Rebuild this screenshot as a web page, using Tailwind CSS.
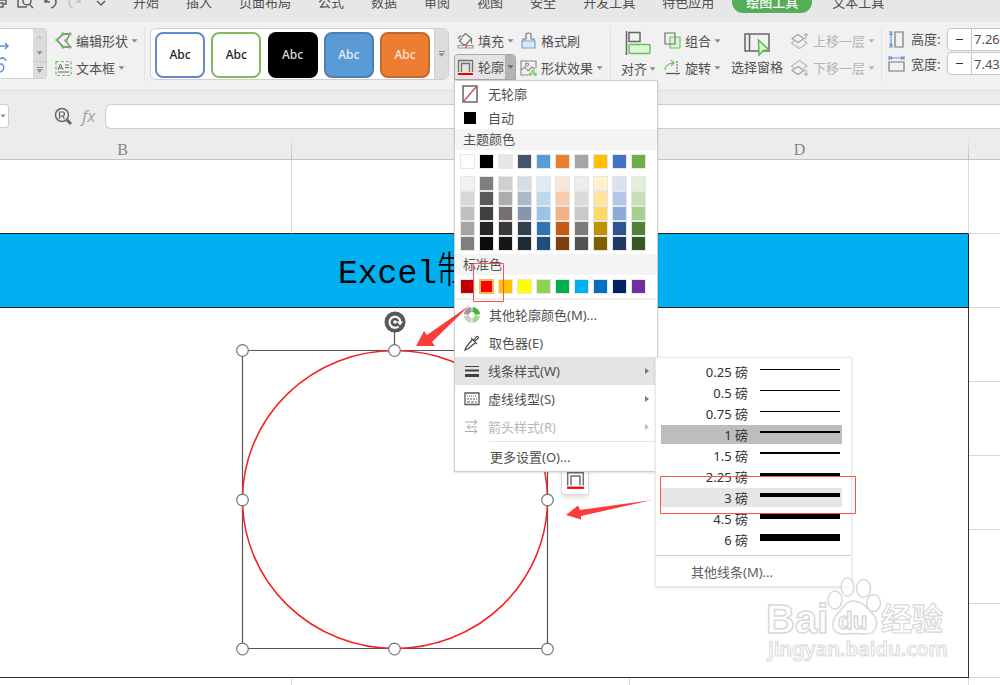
<!DOCTYPE html>
<html lang="zh-CN">
<head>
<meta charset="utf-8">
<meta name="viewport" content="width=device-width, initial-scale=1">
<title>绘图工具</title>
<script src="https://cdn.jsdelivr.net/npm/@tailwindcss/browser@4"></script>
</head>
<body class="min-h-screen overflow-x-clip bg-white font-['Noto_Sans','Noto_Sans_CJK_SC',sans-serif] text-[13px] leading-5 text-[#505050]">
<svg class="hidden">
  <symbol id="caret" viewBox="0 0 7 4"><path d="M.5.3h6L3.500 3.700z" fill="#8a8a8a"/></symbol>
  <symbol id="outline" viewBox="0 0 17 17"><path d="M1.500 13V1.500h14V13M4.500 13V4.500h8V13" fill="none" stroke="#707070" stroke-width="1.300"/><path d="M1 14h15v2H1z" fill="#f00000"/></symbol>
  <symbol id="layers" viewBox="0 0 20 18"><g fill="none" stroke="#b8b8b8" stroke-width="1.200"><path d="M8 2.500 14 6.500 8 10.500 2 6.500z" stroke="#a2a2a2"/><path d="M4 9 1.500 11 9.500 16.500 17 11 13.500 8.500M16 7.500V1.500M14 3.500l2-2 2 2"/></g></symbol>
</svg>

<div class="relative flex min-h-screen flex-col overflow-clip">
  <nav class="h-[22px] overflow-clip bg-[#e7e7e7]">
    <div class="-mt-[10px] flex h-6 items-center whitespace-nowrap">
      <div class="flex w-[133px] shrink-0 items-center">
        <svg class="h-6 w-[120px]" viewBox="0 -10 120 24" fill="none" stroke="#606060" stroke-width="1.500">
          <path d="M0 0h6v4H4M0 3h3v4H0"/><path d="M18-4v11h9M18-4h10"/><circle cx="27" cy="1" r="4"/><path d="m29 4 4 4"/>
          <path d="M45-2v4h5M45 2c4-5 11-5 11 0 0 3-2 5-5 6"/><path d="M80-2v4h-5M80 2c-4-5-11-5-11 0 0 3 2 5 4 6" stroke="#c4c4c4"/><path d="m97 1 4 4 4-4"/>
        </svg>
      </div>
      <div class="flex shrink-0 gap-[27px]">
        <button>开始</button><button>插入</button><button>页面布局</button><button>公式</button><button>数据</button><button>审阅</button><button>视图</button><button>安全</button><button>开发工具</button><button>特色应用</button>
      </div>
      <button class="ml-[18px] mr-5 h-[22px] w-20 shrink-0 rounded-full bg-[#55ad58] font-medium text-white">绘图工具</button>
      <button class="shrink-0">文本工具</button>
    </div>
  </nav>

  <div class="relative z-20 flex h-[69px] items-start whitespace-nowrap border-b border-[#dedede] bg-[#f1f1f1]">
    <div class="mt-[6px] flex h-[51px] w-[47px] shrink-0 overflow-clip rounded-r border border-l-0 border-[#cfcfcf] bg-white">
      <svg class="h-full w-[33px]" viewBox="0 0 33 49" fill="none" stroke="#6a8fd6" stroke-width="1.500"><path d="M0 17h8M5 14l3 3-3 3"/><path d="M0 30q4-3 6 2M0 35c5-1 5 7 0 8"/></svg>
      <div class="grid flex-1 grid-rows-3 divide-y divide-[#c6c9cc] bg-[#dcdcdc]">
        <button aria-label="上" class="flex items-center justify-center opacity-30"><svg class="h-1 w-[7px] rotate-180"><use href="#caret"/></svg></button>
        <button aria-label="下" class="flex items-center justify-center"><svg class="h-1 w-[7px]"><use href="#caret"/></svg></button>
        <button aria-label="更多" class="flex flex-col items-center justify-center gap-px"><span class="h-px w-[6px] bg-[#888]"></span><svg class="h-1 w-[7px]"><use href="#caret"/></svg></button>
      </div>
    </div>
    <div class="ml-2 mt-[5px] w-[90px] shrink-0 border-r border-[#e2e2e2]">
      <button class="flex h-[27px] items-center"><svg class="mr-1 size-[17px]" viewBox="0 0 17 17"><path d="M15 2H8L2 8l6 7h7l-4-6z" fill="none" stroke="#707070" stroke-width="1.300"/><g fill="#6ac45c"><circle cx="15" cy="2" r="1.700"/><circle cx="8" cy="2" r="1.700"/><circle cx="2" cy="8" r="1.700"/><circle cx="8" cy="15" r="1.700"/><circle cx="15" cy="15" r="1.700"/><circle cx="11" cy="8.500" r="1.700"/></g></svg>编辑形状<svg class="ml-[3px] h-1 w-[7px]"><use href="#caret"/></svg></button>
      <button class="flex h-7 items-center"><svg class="mr-1 size-[17px]" viewBox="0 0 17 17" fill="none"><path d="M1 1.500h15v14H1z" stroke="#6ac45c" stroke-width="1.200" stroke-dasharray="3 2"/><path d="m3 10 2.500-6L8 10M4 8h3M10 5h4M10 7.500h4M3 12h11" stroke="#666"/></svg>文本框<svg class="ml-[3px] h-1 w-[7px]"><use href="#caret"/></svg></button>
    </div>
    <div class="ml-[5px] mt-[6px] flex h-[52px] w-[299px] shrink-0 overflow-clip rounded-md border border-[#cfcfcf] bg-white text-xs font-medium">
      <div class="flex flex-1 items-end justify-between px-[4px] pb-px">
        <button class="h-[46px] w-[50px] rounded-lg border-2 border-[#6189cf] text-[#222]">Abc</button>
        <button class="h-[46px] w-[50px] rounded-lg border-2 border-[#83b95f] text-[#222]">Abc</button>
        <button class="h-[46px] w-[50px] rounded-lg bg-black text-[#ddd]">Abc</button>
        <button class="h-[46px] w-[50px] rounded-lg border-2 border-[#4c80b2] bg-[#5b9bd5] text-[#e5eef7]">Abc</button>
        <button class="h-[46px] w-[50px] rounded-lg border-2 border-[#c06a30] bg-[#ed7d31] text-[#fbe5d5]">Abc</button>
      </div>
      <button aria-label="更多样式" class="flex w-[14px] flex-col items-center justify-center gap-px border-l border-[#cfcfcf] bg-[#dcdcdc]"><span class="h-px w-[6px] bg-[#888]"></span><svg class="h-1 w-[7px]"><use href="#caret"/></svg></button>
    </div>
    <div class="ml-[5px] mt-[5px] w-[63px] shrink-0">
      <button class="flex h-[27px] items-center pl-[3px]"><svg class="mr-1 size-[17px]" viewBox="0 0 17 17" fill="none" stroke="#707070" stroke-width="1.200"><path d="M1 6.500 4 3.500M5 5l3.500-3.500 6 5-5.500 6H6L2.500 9 5 6M14.500 6.500v5"/><path d="M1 13.500h15v2.500H1z" stroke="#999"/><path d="m8 16 3-3" stroke="#e55"/></svg>填充<svg class="ml-[3px] h-1 w-[7px]"><use href="#caret"/></svg></button>
      <div class="relative">
        <button class="flex h-[26px] w-[62px] items-center overflow-clip rounded-t border border-[#a8a8a8] bg-[#e4e4e4] pl-[2px]"><svg class="mr-1 size-[17px] shrink-0"><use href="#outline"/></svg>轮廓<span class="ml-px flex h-full flex-1 items-center justify-center bg-[#b4b4b4]"><svg class="h-1 w-[7px] brightness-75"><use href="#caret"/></svg></span></button>

        <div role="menu" class="absolute left-0 top-full w-[204px] border border-[#cdcdcd] bg-white pb-px shadow-sm">
          <button class="flex h-[25px] w-full items-center gap-[10px] pl-[7px]"><svg class="h-[18px] w-4" viewBox="0 0 16 18"><path d="M1 1h14v16H1z" fill="#fff" stroke="#666" stroke-width="1.500"/><path d="M2 16 14 2" stroke="#d44" stroke-width="1.300"/></svg>无轮廓</button>
          <button class="flex h-[23px] w-full items-center gap-[12px] pl-[9px]"><span class="size-3 bg-black"></span>自动</button>
          <div class="h-[21px] bg-[#f4f4f4] pl-2">主题颜色</div>
          <div id="theme" class="ml-[5px] mt-1 flex gap-1"></div>
          <div id="shades" class="ml-[5px] mt-[7px] grid w-fit grid-cols-10 gap-x-1"></div>
          <div class="mt-[3px] h-[21px] bg-[#f4f4f4] pl-2">标准色</div>
          <div id="standard" class="ml-[5px] mt-1 flex gap-1"></div>
          <div class="mb-px mt-1 h-[2px] bg-[#eeeeee]"></div>
          <button class="flex h-7 w-full items-center gap-[9px] pl-[9px]"><svg class="size-4" viewBox="0 0 16 16" fill="none" stroke-width="5"><path d="M8.500 2.500a5.500 5.500 0 0 1 5 5" stroke="#43b530"/><path d="M13.500 8.500a5.500 5.500 0 0 1-5 5" stroke="#9bdb90"/><path d="M7.500 13.500a5.500 5.500 0 0 1-5-5" stroke="#cacaca"/><path d="M2.500 7.500a5.500 5.500 0 0 1 5-5" stroke="#999"/></svg>其他轮廓颜色(M)...</button>
          <button class="flex h-7 w-full items-center gap-[9px] pl-[9px]"><svg class="size-4" viewBox="0 0 16 16" fill="none" stroke="#444" stroke-width="1.200"><path d="m8 5-5.500 6.500L1 15l3.500-1.500L11 8"/><path d="m7 3 6 6M9.500 5.500l3-4q2-.5 2 1.500L10.500 6.500"/></svg>取色器(E)</button>
          <div class="relative">
            <button class="flex h-7 w-full items-center gap-2 bg-[#e4e4e4] pl-[9px]"><svg class="size-4" viewBox="0 0 16 16" fill="#404040"><path d="M1 3h14v1H1zM1 6.500h14v2H1zM1 11h14v3H1z"/></svg>线条样式(W)<svg class="ml-auto mr-2 h-[6px] w-1" viewBox="0 0 4 6"><path d="m0 0 4 3-4 3z" fill="#777"/></svg></button>
            <div role="menu" class="absolute left-[200px] top-0 w-[197px] border border-[#e8e8e8] bg-white pt-[3px] text-[#303030] shadow-sm">
              <div id="weights" class="px-[5px]"></div>
              <div class="mt-[5px] h-px bg-[#cfcfcf]"></div>
              <button class="flex h-[30px] w-full items-center pl-[35px] pt-[2px] text-[#606060]">其他线条(M)...</button>
            </div>
          </div>
          <button class="flex h-7 w-full items-center gap-2 pl-[9px]"><svg class="size-4" viewBox="0 0 16 16" fill="none" stroke="#555"><path d="M1 2h14v11.500H1z" stroke-width="1.300"/><path d="M3 5h10" stroke-dasharray="1 1"/><path d="M3 8h10" stroke-dasharray="2 1"/><path d="M3 11h10" stroke-dasharray="3 1"/></svg>虚线线型(S)<svg class="ml-auto mr-2 h-[6px] w-1" viewBox="0 0 4 6"><path d="m0 0 4 3-4 3z" fill="#777"/></svg></button>
          <button disabled class="flex h-7 w-full items-center gap-2 pl-[9px] text-[#b5b5b5]"><svg class="size-4" viewBox="0 0 16 16" fill="none" stroke="#aaa"><path d="M1 3h12M10 .5 13 3l-3 2.500M3 8h10M6 5.500 3 8l3 2.500M1 12.500h12M10 10l3 2.500-3 2.500"/></svg>箭头样式(R)<svg class="ml-auto mr-2 h-[6px] w-1" viewBox="0 0 4 6"><path d="m0 0 4 3-4 3z" fill="#bbb"/></svg></button>
          <div class="ml-[34px] h-px bg-[#e8e8e8]"></div>
          <button class="flex h-7 w-full items-center pl-[35px] pt-px">更多设置(O)...</button>
        </div>
      </div>
    </div>
    <div class="ml-[3px] mt-[5px] w-[91px] shrink-0 border-r border-[#e2e2e2]">
      <button class="flex h-[27px] items-center"><svg class="mr-1 size-[17px]" viewBox="0 0 17 17" fill="none" stroke-width="1.200"><path d="M3 9V7h3V2q2.500-2 5 0v5h3v2" stroke="#777"/><path d="M2 9h13v7H2z" fill="#dbe6f8" stroke="#7d9fdc"/></svg>格式刷</button>
      <button class="flex h-7 items-center"><svg class="mr-1 size-[17px]" viewBox="0 0 17 17" fill="none" stroke="#888" stroke-width="1.100"><path d="M8 15H1V1h15v7M1 10l4-3 3 4 4-4 3 2"/><circle cx="7" cy="4.500" r="1.500"/><path d="m13 10 1.500 2-1.500 2-1.500-2zM10 13.500l1 1-1 1-1-1zM15.500 13.500l1 1-1 1-1-1z" stroke="#6ac45c"/></svg>形状效果<svg class="ml-[3px] h-1 w-[7px]"><use href="#caret"/></svg></button>
    </div>
    <button class="ml-[10px] mt-[8px] w-[37px] shrink-0"><svg class="ml-1 h-[26px] w-[26px]" viewBox="0 0 26 26" fill="none" stroke-width="1.500"><path d="M1.500 1v24M4 2.500h11v9H4z" stroke="#666"/><rect x="4" y="14.500" width="21" height="9" rx="1" fill="#e0f3dc" stroke="#6ac45c"/></svg><span class="mt-[3px] flex h-5 items-center">对齐<svg class="ml-[2px] h-1 w-[7px]"><use href="#caret"/></svg></span></button>
    <div class="ml-[6px] mt-[5px] w-[60px] shrink-0">
      <button class="flex h-[27px] items-center"><svg class="mr-1 size-[17px]" viewBox="0 0 17 17" fill="none" stroke-width="1.200"><path d="M6 5h10v11H6z" fill="#dff2da" stroke="#6ac45c"/><path d="M1 1h10v11H1z" stroke="#707070"/></svg>组合<svg class="ml-[3px] h-1 w-[7px]"><use href="#caret"/></svg></button>
      <button class="flex h-7 items-center"><svg class="mr-1 size-[17px]" viewBox="0 0 17 17" fill="none" stroke-width="1.200"><path d="M1 10q1-7 9-7M7 0l3 3-3 3" stroke="#6ac45c"/><path d="M2 13.500h14" stroke="#555"/><path d="M13 1v15" stroke="#777" stroke-dasharray="2 1"/></svg>旋转<svg class="ml-[3px] h-1 w-[7px]"><use href="#caret"/></svg></button>
    </div>
    <button class="ml-[6px] mt-[10px] w-[54px] shrink-0"><svg class="ml-[14px] h-6 w-[27px]" viewBox="0 0 27 24" fill="none" stroke-width="1.500"><path d="M1 2h24v17H1zM5.500 2v17" stroke="#666"/><path d="m14.500 8 10.500 10-5.500.5-4.500 4.500z" fill="#dff2da" stroke="#59bb49"/></svg><span class="mt-px block h-5">选择窗格</span></button>
    <div class="ml-[6px] mt-[5px] w-[92px] shrink-0 border-r border-[#e2e2e2] text-[#b5b5b5]">
      <button disabled class="flex h-[27px] items-center"><svg class="mr-[3px] h-[18px] w-5"><use href="#layers"/></svg>上移一层<svg class="ml-[3px] h-1 w-[7px] opacity-60"><use href="#caret"/></svg></button>
      <button disabled class="flex h-7 items-center"><svg class="mr-[3px] h-[18px] w-5 -scale-y-100"><use href="#layers"/></svg>下移一层<svg class="ml-[3px] h-1 w-[7px] opacity-60"><use href="#caret"/></svg></button>
    </div>
    <div class="ml-[6px] mt-[6px] grid shrink-0 gap-[2px]">
      <div class="flex h-[22px] items-center"><svg class="mr-[6px] size-[17px]" viewBox="0 0 17 17" fill="none" stroke-width="1.200"><path d="M7 1h8v15H7z" stroke="#777"/><path d="M1 1h4M1 16h4M3 2v13M1.500 4 3 2l1.500 2M1.500 13 3 15l1.500-2" stroke="#6a93dc"/></svg><label for="height" class="w-[36px]">高度:</label><div class="flex h-[23px] w-[90px] overflow-clip rounded border border-[#c6c6c6] bg-white"><button aria-label="减小高度" class="flex w-[25px] items-center justify-center border-r border-[#c6c6c6]"><span class="h-px w-[7px] bg-[#333]"></span></button><input id="height" value="7.26" class="w-16 pl-[2px]"></div></div>
      <div class="flex h-[23px] items-center"><svg class="mr-[6px] size-[17px]" viewBox="0 0 17 17" fill="none" stroke-width="1.200"><path d="M1 7h15v9H1z" stroke="#777"/><path d="M1 1v4M16 1v4M2 3h13M4 1.500 2 3l2 1.500M13 1.500 15 3l-2 1.500" stroke="#6a93dc"/></svg><label for="width" class="w-[36px]">宽度:</label><div class="flex h-[23px] w-[90px] overflow-clip rounded border border-[#c6c6c6] bg-white"><button aria-label="减小宽度" class="flex w-[25px] items-center justify-center border-r border-[#c6c6c6]"><span class="h-px w-[7px] bg-[#333]"></span></button><input id="width" value="7.43" class="w-16 pl-[2px]"></div></div>
    </div>
  </div>

  <div class="flex h-[38px] items-end bg-[#ececec]">
    <button aria-label="名称框" class="mb-px flex h-6 w-[9px] shrink-0 items-center rounded-r border border-l-0 border-[#cdcdcd] bg-white"><svg class="h-1 w-[6px]"><use href="#caret"/></svg></button>
    <button aria-label="查找" class="mb-[3px] ml-[45px]"><svg class="size-[19px]" viewBox="0 0 19 19" fill="none" stroke="#666"><circle cx="8" cy="8" r="6.500" stroke-width="1.500"/><path d="m13 13 4 4" stroke-width="3"/><path d="M5.500 12V5h4q2 2 0 4h-4M8.500 9l2 3" stroke-width="1.200"/></svg></button>
    <button class="mb-[3px] ml-[9px] w-[23px] text-left font-['Open_Sans','Noto_Sans',sans-serif] text-[17px] italic text-[#a5a5a5]">fx</button>
    <input aria-label="编辑栏" class="h-[25px] min-w-0 flex-1 rounded-l-md border border-r-0 border-[#cdcdcd] bg-white px-2">
  </div>

  <table class="w-full table-fixed border-separate border-spacing-0">
    <colgroup><col class="w-[292px]"><col class="w-[338px]"><col class="w-[339px]"><col></colgroup>
    <thead>
      <tr class="h-[31px] bg-[#ececec] font-['Liberation_Serif',serif] text-base text-[#858585]">
        <th class="border-b border-[#c4c4c4] bg-[linear-gradient(transparent,#bbb)] bg-[length:1px_70%] bg-right-bottom bg-no-repeat p-0 pr-[47px] pt-3 font-normal leading-[18px]">B</th>
        <th class="border-b border-[#c4c4c4] bg-[linear-gradient(transparent,#bbb)] bg-[length:1px_70%] bg-right-bottom bg-no-repeat p-0 pt-3 font-normal leading-[18px]"></th>
        <th class="border-b border-[#c4c4c4] bg-[linear-gradient(transparent,#bbb)] bg-[length:1px_70%] bg-right-bottom bg-no-repeat p-0 pt-3 font-normal leading-[18px]">D</th>
        <th class="border-b border-[#c4c4c4] p-0"></th>
      </tr>
    </thead>
    <tbody>
      <tr class="h-[74px]"><td class="border-b border-r border-[#d9d9d9] border-b-[#222]"></td><td class="border-b border-r border-[#d9d9d9] border-b-[#222]"></td><td class="border-b border-r border-[#d9d9d9] border-b-[#222]"></td><td class="border-b border-[#d9d9d9]"></td></tr>
      <tr class="h-[74px]"><td colspan="3" class="border-b border-r border-[#222] bg-[#00b0f0] p-0 pl-[338px] text-[33px] leading-[56px] text-black"><span class="font-['Liberation_Mono',monospace]">Excel</span><span class="font-['Noto_Sans_CJK_SC',sans-serif] text-[38px] font-light">制</span></td><td class="border-b border-[#d9d9d9]"></td></tr>
      <tr class="h-[74px]"><td colspan="3" rowspan="5" class="border-b border-r border-[#333]"></td><td class="border-b border-[#d9d9d9]"></td></tr>
      <tr class="h-[74px]"><td class="border-b border-[#d9d9d9]"></td></tr>
      <tr class="h-[74px]"><td class="border-b border-[#d9d9d9]"></td></tr>
      <tr class="h-[74px]"><td class="border-b border-[#d9d9d9]"></td></tr>
      <tr class="h-[74px]"><td class="border-b border-[#d9d9d9]"></td></tr>
      <tr class="h-[7px]"><td class="border-r border-[#d9d9d9] p-0"></td><td class="border-r border-[#d9d9d9] p-0"></td><td class="border-r border-[#d9d9d9] p-0"></td><td class="p-0"></td></tr>
    </tbody>
  </table>

  <!-- Selected circle with its handles -->
  <svg class="pointer-events-none absolute inset-0 z-10 size-full">
    <path d="M394.500 330v20M242.500 350.500h305v298h-305z" fill="none" stroke="#555" stroke-width="1.200"/>
    <ellipse cx="395" cy="499.500" rx="152.500" ry="149" fill="none" stroke="#f52020" stroke-width="1.500"/>
    <circle cx="395" cy="322" r="10.500" fill="#585858"/><path d="M398.500 326.500a5.500 5.500 0 1 1 2-4.500" fill="none" stroke="#fff" stroke-width="2.200"/><path d="M396.500 321.500h6.500l-3 4z" fill="#fff"/><circle cx="395" cy="322" r="1.800" fill="#fff"/>
    <g fill="#fff" stroke="#777" stroke-width="1.200"><circle cx="242.500" cy="350.500" r="5.800"/><circle cx="394.500" cy="350.500" r="5.800"/><circle cx="242.500" cy="500" r="5.800"/><circle cx="547.500" cy="500" r="5.800"/><circle cx="242.500" cy="649" r="5.800"/><circle cx="394.500" cy="649" r="5.800"/><circle cx="547.500" cy="649" r="5.800"/></g>
  </svg>
  <button aria-label="形状轮廓" class="absolute left-[561px] top-[466px] z-10 flex h-[29px] w-[28px] items-center justify-center border border-[#ddd] bg-white shadow-md"><svg class="size-[19px]" viewBox="0 0 17 17"><use href="#outline"/></svg></button>

  <!-- Annotations and watermark -->
  <svg class="pointer-events-none absolute inset-0 z-30 size-full">
    <g fill="none" stroke="#ff5050"><path d="M473.500 263.500h30v38h-30zM660.500 476.500h195v37h-195z"/></g>
    <path d="M470 305 432 342 435 346 416 346 424 331 427 335zM652 500 581 516 581 519.500 566 515 578 505.500 580 510z" fill="#fb3c3c"/>
    <g fill="#fff" stroke="#d8d8d8" stroke-width="1.500" fill-opacity=".75">
      <ellipse cx="835" cy="600" rx="7" ry="9"/><ellipse cx="847.500" cy="587" rx="6.500" ry="9"/><ellipse cx="863.500" cy="588.500" rx="7" ry="9"/><ellipse cx="873.500" cy="603" rx="7" ry="8.500"/>
      <path d="M853 601c-7 0-9 6-14 11-8 8-10 22 5 22 6 0 12-1 20 0 14 1 16-13 8-21-6-6-10-12-19-12z"/>
      <g font-family="Liberation Sans, Noto Sans CJK SC, sans-serif" font-weight="bold"><text x="766" y="633" font-size="40">Bai</text><text x="838" y="629" font-size="24">du</text><text x="881" y="630" font-size="31" font-family="Noto Sans CJK SC, sans-serif" stroke-width="1.200">经验</text></g>
      <text x="768" y="656" font-size="20" font-weight="600" font-family="Noto Sans, sans-serif" stroke-width="1">jingyan.baidu.com</text>
    </g>
  </svg>
</div>

<script>
const swatch = (color, selected) => `<button aria-label="#${color}" class="${selected ? 'size-[15px] border-2 border-[#f7b955]' : 'size-[15px] border border-[#e6e6e6]'}" style="background-color:#${color}"></button>`;
const fill = (id, colors, selected) => {
  document.getElementById(id).innerHTML = colors.split(' ').map((c, i) => swatch(c, i === selected)).join('');
};
fill('theme', 'ffffff 000000 e7e6e6 44546a 5b9bd5 ed7d31 a5a5a5 ffc000 4472c4 70ad47');
fill('shades', 'f2f2f2 7f7f7f d0cece d6dce4 deebf6 fbe5d5 ededed fff2cc d9e2f3 e2efd9 ' +
  'd8d8d8 595959 aeabab adb9ca bdd7ee f7cbac dbdbdb fee599 b4c6e7 c5e0b3 ' +
  'bfbfbf 3f3f3f 757070 8496b0 9cc3e5 f4b183 c9c9c9 ffd965 8eaadb a8d08d ' +
  'a5a5a5 262626 3a3838 323f4f 2e75b5 c55a11 7b7b7b bf9000 2f5496 538135 ' +
  '7f7f7f 0c0c0c 171616 222a35 1e4e79 833c0b 525252 7f6000 1f3864 375623');
fill('standard', 'c00000 ff0000 ffc000 ffff00 92d050 00b050 00b0f0 0070c0 002060 7030a0', 1);
const weights = [['0.25', 1], ['0.5', 1], ['0.75', 1], ['1', 2], ['1.5', 2], ['2.25', 3], ['3', 4], ['4.5', 5], ['6', 7]];
const rowState = { '1': 'bg-[#bdbdbd]', '3': 'bg-[#e5e5e5]' };
document.getElementById('weights').innerHTML = weights.map(([pt, px]) =>
  `<button class="flex h-[21px] w-[181px] items-center"><span class="flex h-[19px] w-full items-center ${rowState[pt] || ''}"><span class="w-[87px] text-right">${pt} 磅</span><span class="mb-[5px] ml-3 w-20 bg-black" style="height:${px}px"></span></span></button>`).join('');
</script>
</body>
</html>
